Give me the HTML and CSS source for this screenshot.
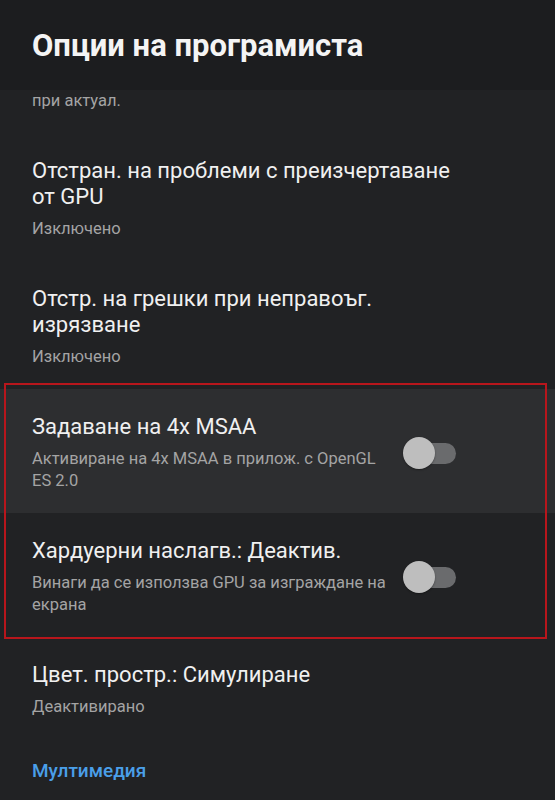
FILE: index.html
```html
<!DOCTYPE html>
<html lang="bg">
<head>
    <meta charset="UTF-8">
    <meta name="viewport" content="width=device-width, initial-scale=1.0">
    <title>Опции на програмиста</title>
    <link rel="stylesheet" href="styles.css">
</head>
<body>
    <header class="toolbar">
        <h1>Опции на програмиста</h1>
    </header>

    <main class="prefs">
        <!-- tail of the item scrolled under the toolbar -->
        <div class="pref pref-tail">
            <div class="pref-summary">при актуал.</div>
        </div>

        <div class="pref">
            <div class="pref-text">
                <div class="pref-title">Отстран. на проблеми с преизчертаване от GPU</div>
                <div class="pref-summary">Изключено</div>
            </div>
        </div>

        <div class="pref">
            <div class="pref-text">
                <div class="pref-title">Отстр. на грешки при неправоъг. изрязване</div>
                <div class="pref-summary">Изключено</div>
            </div>
        </div>

        <div class="pref-group">
            <div class="pref pref-switch pref-focused">
                <div class="pref-text">
                    <div class="pref-title">Задаване на 4x MSAA</div>
                    <div class="pref-summary">Активиране на 4x MSAA в прилож. с OpenGL ES 2.0</div>
                </div>
                <div class="switch"><span class="thumb"></span></div>
            </div>

            <div class="pref pref-switch">
                <div class="pref-text">
                    <div class="pref-title">Хардуерни наслагв.: Деактив.</div>
                    <div class="pref-summary">Винаги да се използва GPU за изграждане на екрана</div>
                </div>
                <div class="switch"><span class="thumb"></span></div>
            </div>
        </div>

        <div class="pref">
            <div class="pref-text">
                <div class="pref-title">Цвет. простр.: Симулиране</div>
                <div class="pref-summary">Деактивирано</div>
            </div>
        </div>

        <div class="category">Мултимедия</div>
    </main>
</body>
</html>
```

FILE: styles.css
```css
body {
    margin: 0;
    height: 800px;
    overflow: hidden;
    background: #212224;
    font-family: Roboto, "Noto Sans", sans-serif;
    color: #f0f0f0;
}

/* Toolbar */
.toolbar {
    height: 90px;
    box-sizing: border-box;
    padding: 29px 32px 0;
    background: #1c1d1f;
}

.toolbar h1 {
    margin: 0;
    font-size: 31px;
    line-height: 34px;
    font-weight: 700;
    color: #f4f4f4;
}

/* Preference list */
.prefs {
    height: 710px;
    overflow: hidden;
}

.pref {
    display: flex;
    align-items: center;
    padding: 25px 90px 21px 32px;
}

.pref-tail {
    padding-top: 0;
}

.pref-tail .pref-summary {
    margin-top: 0;
}

.pref-text {
    flex: 1;
    min-width: 0;
}

.pref-title {
    font-size: 22px;
    line-height: 26px;
    color: #f0f0f0;
}

.pref-summary {
    margin-top: 8px;
    font-size: 16.5px;
    line-height: 22px;
    color: #a4a4a4;
}

.pref-switch {
    padding-right: 99px;
}

.pref-focused {
    background: #2d2e30;
}

.pref-group {
    position: relative;
}

.pref-group::after {
    content: "";
    position: absolute;
    top: -6px;
    left: 4px;
    right: 8px;
    bottom: -2px;
    border: 2px solid #b8161c;
    pointer-events: none;
}

/* Switch (off) */
.switch {
    position: relative;
    flex: none;
    width: 51px;
    height: 21px;
    margin-left: 9px;
    border-radius: 11px;
    background: #6a6b6d;
}

.switch .thumb {
    position: absolute;
    left: -2px;
    top: -5.5px;
    width: 32px;
    height: 32px;
    border-radius: 50%;
    background: #bebebe;
    box-shadow: 0 1px 2px rgba(0, 0, 0, 0.35);
}

.category {
    padding: 20px 32px 0;
    font-size: 19px;
    line-height: 24px;
    font-weight: 500;
    color: #4a9fe9;
}
```
